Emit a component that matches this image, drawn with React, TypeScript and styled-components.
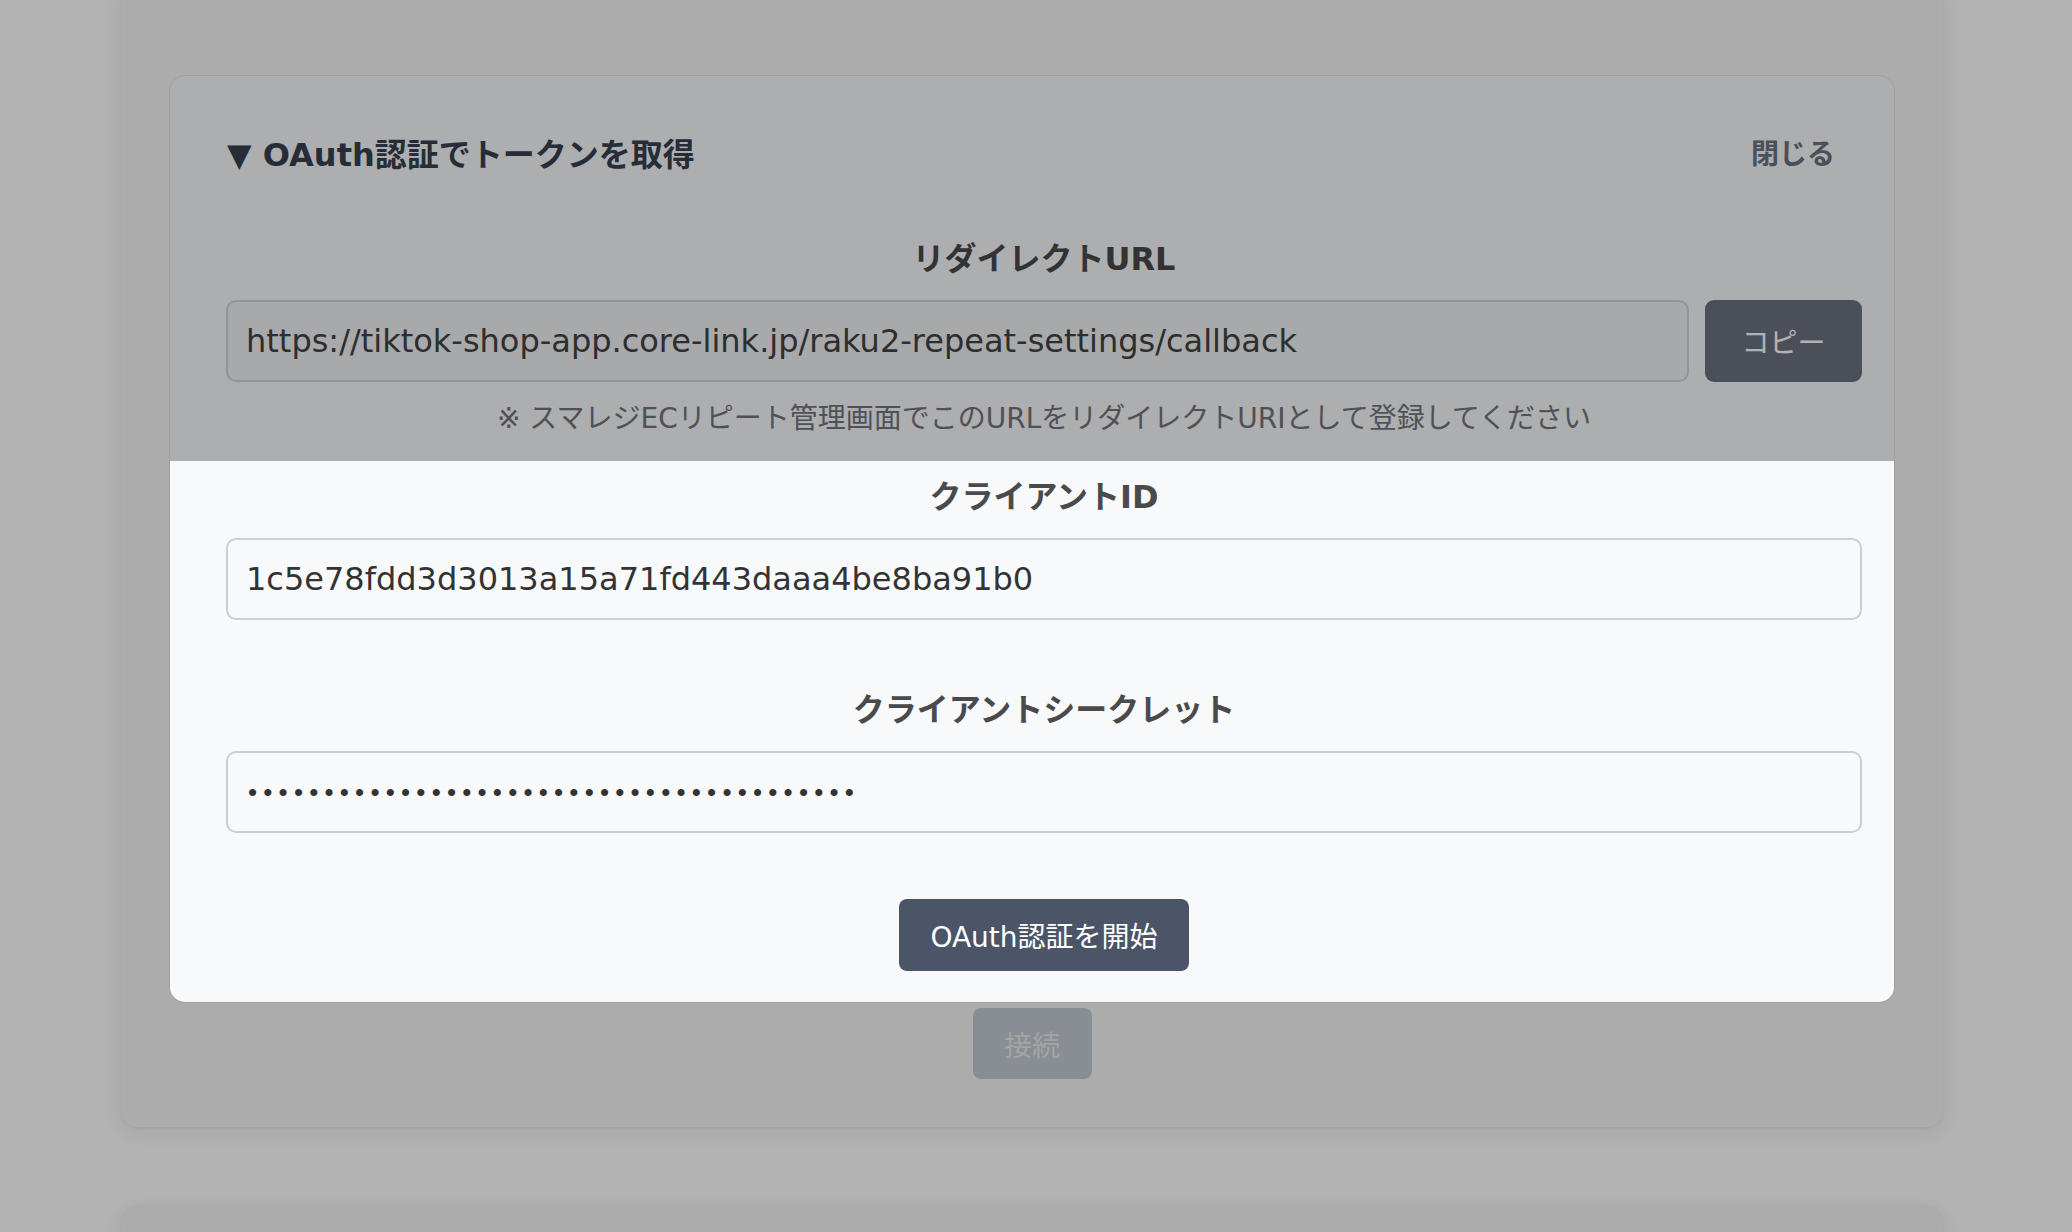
import React from "react";
import styled, { createGlobalStyle } from "styled-components";

const Global = createGlobalStyle`
  html, body {
    margin: 0;
    padding: 0;
    overflow: hidden;
    background: #ffffff;
  }
  * { box-sizing: border-box; }
  body {
    font-family: "DejaVu Sans", "Noto Sans CJK JP", sans-serif;
  }
`;

const FONT = `"DejaVu Sans", "Noto Sans CJK JP", sans-serif`;

const Page = styled.div`
  position: relative;
  min-height: 1232px;
  padding-left: 121px;
  background: #ffffff;
`;

const Card = styled.section<{ $stub?: boolean }>`
  width: 1822px;
  margin-top: ${(p) => (p.$stub ? "78px" : "-20px")};
  padding: ${(p) => (p.$stub ? "0 48px" : "95px 48px 48px")};
  height: ${(p) => (p.$stub ? "240px" : "auto")};
  background: #f7f7f7;
  border-radius: 16px;
  box-shadow: 0 6px 18px rgba(0, 0, 0, 0.07), 0 1px 3px rgba(0, 0, 0, 0.05);
  display: flex;
  flex-direction: column;
`;

const Panel = styled.div`
  border: 1px solid #e3e5e9;
  border-radius: 16px;
  background: #f8f9fb;
  display: flex;
  flex-direction: column;
`;

const PanelHeader = styled.div`
  display: flex;
  align-items: center;
  justify-content: space-between;
  padding: 55px 59px 0 57px;
`;

const Title = styled.h3`
  margin: 0;
  font-family: ${FONT};
  font-size: 32px;
  line-height: 48px;
  font-weight: 700;
  color: #374151;
`;

const CloseLink = styled.button`
  border: 0;
  background: none;
  padding: 0;
  font-family: ${FONT};
  font-size: 28px;
  line-height: 48px;
  font-weight: 700;
  color: #6b7280;
  cursor: pointer;
`;

const RedirectSection = styled.div`
  display: flex;
  flex-direction: column;
  padding: 0 32px 22px 56px;
  margin-top: 56px;
`;

const Spotlight = styled.div`
  position: relative;
  z-index: 2;
  background: #f8f9fb;
  border-radius: 0 0 15px 15px;
  display: flex;
  flex-direction: column;
  align-items: stretch;
  gap: 66px;
  padding: 12px 32px 31px 56px;
`;

const Field = styled.div`
  display: flex;
  flex-direction: column;
`;

const FieldLabel = styled.label`
  display: block;
  text-align: center;
  font-family: ${FONT};
  font-size: 32px;
  line-height: 48px;
  font-weight: 700;
  color: #4a4a4a;
  margin-bottom: 17px;
`;

const UrlRow = styled.div`
  display: flex;
  gap: 16px;
`;

const TextInput = styled.input<{ $muted?: boolean; $grow?: boolean }>`
  flex: ${(p) => (p.$grow ? "1 1 0" : "none")};
  min-width: 0;
  width: 100%;
  height: 82px;
  padding: 0 18px;
  border: 2px solid ${(p) => (p.$muted ? "#d4d5d8" : "#ccced3")};
  border-radius: 10px;
  background: ${(p) => (p.$muted ? "#f1f2f4" : "#f8f9fb")};
  font-family: ${FONT};
  font-size: 32px;
  color: ${(p) => (p.$muted ? "#424242" : "#333333")};
  outline: none;
`;

const SecretInput = styled(TextInput)`
  font-family: "Liberation Sans", sans-serif;
  font-size: 26px;
  letter-spacing: 6.2px;
  padding-left: 20px;
`;

const CopyButton = styled.button`
  flex: none;
  width: 157px;
  height: 82px;
  border: 0;
  border-radius: 9px;
  background: #6b7280;
  color: #ffffff;
  font-family: ${FONT};
  font-size: 28px;
`;

const Note = styled.p`
  margin: 17px 0 0;
  text-align: center;
  font-family: ${FONT};
  font-size: 28px;
  line-height: 40px;
  color: #72757c;
`;

const PrimaryButton = styled.button`
  align-self: center;
  height: 72px;
  padding: 0 31px;
  border: 0;
  border-radius: 8px;
  background: #4b5567;
  color: #ffffff;
  font-family: ${FONT};
  font-size: 28px;
`;

const ConnectButton = styled.button`
  align-self: center;
  margin-top: 5px;
  width: 119px;
  height: 71px;
  border: 0;
  border-radius: 8px;
  background: #c5cad4;
  color: #ebebeb;
  font-family: ${FONT};
  font-size: 28px;
`;

const Overlay = styled.div`
  position: fixed;
  inset: 0;
  z-index: 1;
  background: rgba(0, 0, 0, 0.3);
  pointer-events: none;
`;

export default function App() {
  return (
    <>
      <Global />
      <Page>
        <Card>
          <Panel>
            <PanelHeader>
              <Title>▼ OAuth認証でトークンを取得</Title>
              <CloseLink>閉じる</CloseLink>
            </PanelHeader>
            <RedirectSection>
              <FieldLabel>リダイレクトURL</FieldLabel>
              <UrlRow>
                <TextInput
                  $muted
                  $grow
                  readOnly
                  value="https://tiktok-shop-app.core-link.jp/raku2-repeat-settings/callback"
                />
                <CopyButton>コピー</CopyButton>
              </UrlRow>
              <Note>※ スマレジECリピート管理画面でこのURLをリダイレクトURIとして登録してください</Note>
            </RedirectSection>
            <Spotlight>
              <Field>
                <FieldLabel>クライアントID</FieldLabel>
                <TextInput readOnly value="1c5e78fdd3d3013a15a71fd443daaa4be8ba91b0" />
              </Field>
              <Field>
                <FieldLabel>クライアントシークレット</FieldLabel>
                <SecretInput type="password" readOnly value="0123456789abcdef0123456789abcdef01234567" />
              </Field>
              <PrimaryButton>OAuth認証を開始</PrimaryButton>
            </Spotlight>
          </Panel>
          <ConnectButton disabled>接続</ConnectButton>
        </Card>
        <Card $stub />
        <Overlay />
      </Page>
    </>
  );
}
